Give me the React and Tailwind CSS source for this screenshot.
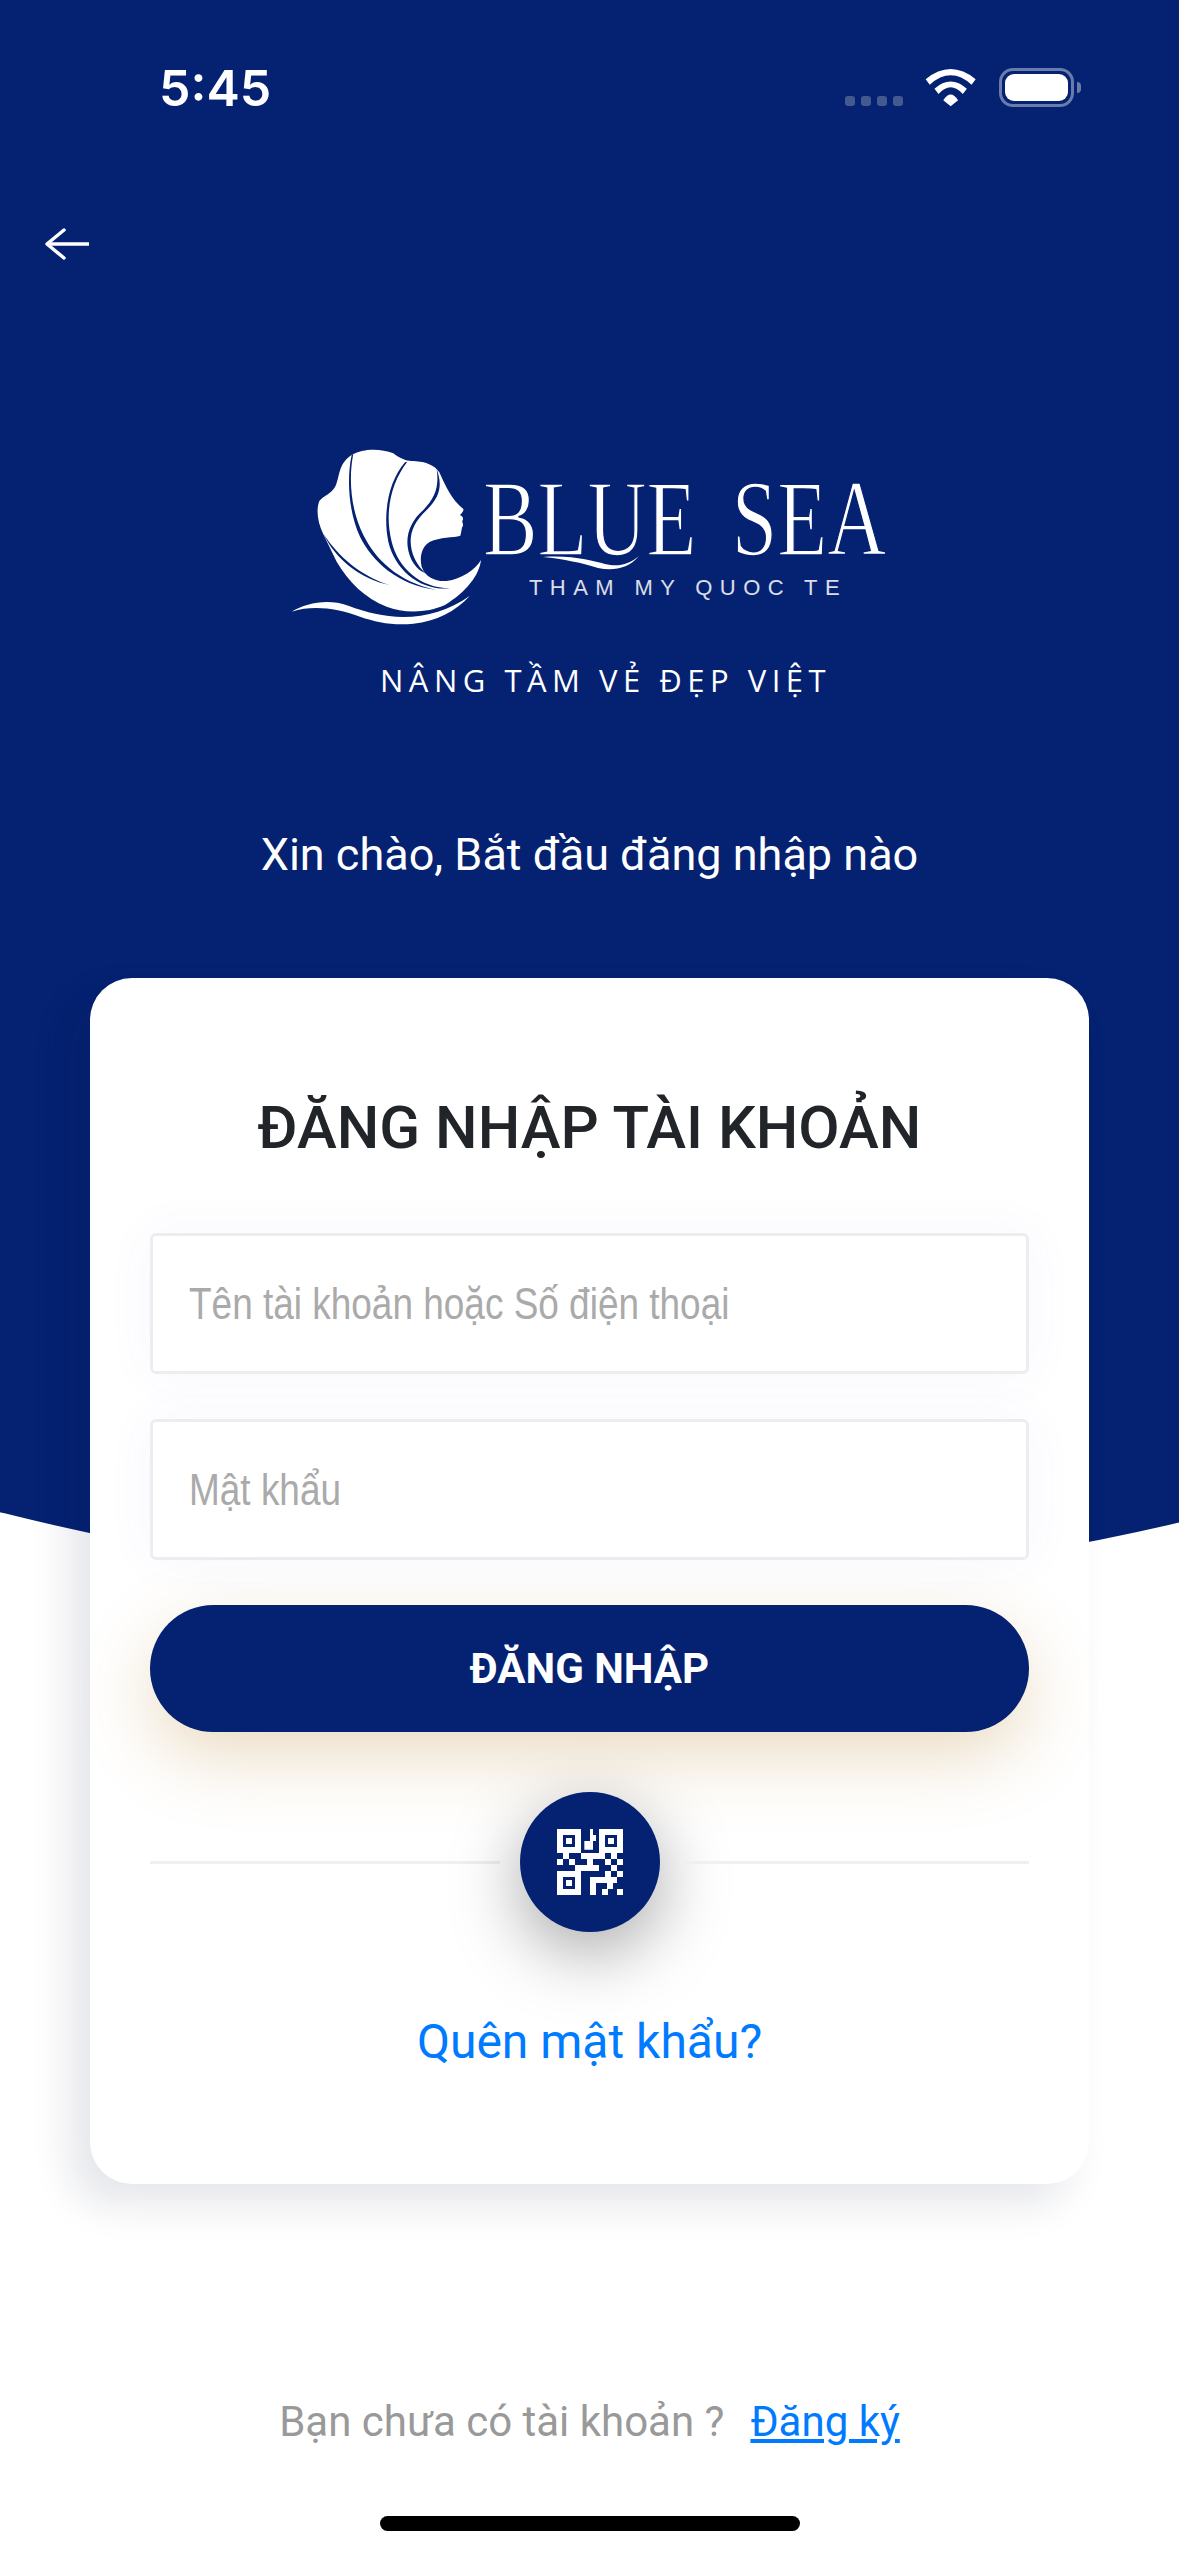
const navy = "#042172";

const StatusBar = () => (
  <div className="flex h-[130px] items-start justify-between pl-[159px] pr-[98px] pt-[58px]">
    <span className="font-['Inter',sans-serif] text-[50px] font-semibold leading-[60px] text-white">
      5:45
    </span>
    <div className="flex items-start pt-[10px]">
      {/* signal dots */}
      <div className="mt-[28px] flex gap-[6px]">
        {[0, 1, 2, 3].map((i) => (
          <div key={i} className="h-[10px] w-[10px] rounded-[3px] bg-[#44598f]" />
        ))}
      </div>
      <svg className="ml-[22px]" width="52" height="39" viewBox="318 55 154 115" fill="white">
        <path d="M320 88Q394 28 468 88L456 104Q394 48 332 104Z" />
        <path d="M346 116Q394 74 442 116L430 132Q394 92 358 132Z" />
        <path d="M372 150Q394 116 416 150L394 168Z" />
      </svg>
      {/* battery */}
      <div className="ml-[22px] flex items-center">
        <div className="h-[39px] w-[75px] rounded-[14px] border-[3px] border-[#6a7cab] p-[3px]">
          <div className="h-full w-full rounded-[9px] bg-white" />
        </div>
        <div className="ml-[3px] h-[11px] w-[4px] rounded-r-full bg-[#6a7cab]" />
      </div>
    </div>
  </div>
);

const BackArrow = () => (
  <svg className="ml-[45px] mt-[98px]" width="46" height="32" viewBox="0 0 46 32" fill="none" stroke="white" strokeWidth="3.5" strokeLinecap="round" strokeLinejoin="round">
    <path d="M2 16H44" strokeLinecap="butt" />
    <path d="M19 2L2 16L19 30" />
  </svg>
);

const LogoMark = () => (
  <svg width="220" height="200" viewBox="0 0 660 600" className="shrink-0">
    <path
      fill="white"
      d="M218 58C245 42 300 38 340 55C360 70 380 80 400 78C440 80 465 92 478 112C495 150 515 195 550 222C552 228 546 234 540 240C546 244 552 248 548 256C544 260 552 268 548 274C544 280 545 290 541 302C520 308 480 306 450 320C425 335 418 365 425 395C435 425 465 440 500 438C545 432 585 405 603 375C598 420 560 470 495 510C440 535 370 535 320 515C255 490 205 440 170 380L130 298C112 260 108 225 118 198C130 182 155 178 168 150C180 120 175 85 218 58Z"
    />
    <path
      fill="white"
      d="M35 530C80 505 140 490 205 512C260 532 310 545 370 546C440 545 510 525 570 482C525 530 470 558 400 566C340 572 290 562 240 545C170 520 100 510 35 530Z"
    />
    <path fill={navy} d="M220 56C205 130 212 225 250 300C285 370 350 440 470 465C350 448 278 380 240 305C205 230 200 130 215 60Z" />
    <path fill={navy} d="M382 80C335 140 312 230 335 320C355 400 420 458 510 460C420 468 345 405 325 320C308 235 325 140 375 82Z" />
    <path fill={navy} d="M130 296C175 365 245 425 330 450C240 432 165 370 130 296Z" />
    <path fill={navy} d="M470 103C488 150 480 185 440 225C400 262 385 300 395 345C402 375 420 400 437 415C410 405 388 375 383 335C378 295 395 255 430 225C465 190 478 155 470 103Z" />
  </svg>
);

const Logo = () => (
  <div className="ml-[280px] mt-[175px] flex h-[200px]">
    <LogoMark />
    <div className="relative -ml-[17px] pt-[29px]">
      <div className="h-[109px] w-[403px] origin-top-left scale-x-[0.75] whitespace-nowrap font-['Liberation_Serif',serif] text-[109px] leading-none text-white [-webkit-text-stroke:1.6px_#042172] [word-spacing:20px]">
        BLUE SEA
      </div>
      <svg className="absolute left-[60px] top-[118px]" width="100" height="20" viewBox="0 0 100 20" fill="white">
        <path d="M0 4C30 2 50 8 62 11C75 14 85 12 96 3C85 16 70 18 55 15C40 10 20 6 0 4Z" />
      </svg>
      <div className="ml-[46px] mt-[4px] whitespace-nowrap font-['Liberation_Sans',sans-serif] text-[22px] leading-none tracking-[7.4px] text-white/85">
        THAM MY QUOC TE
      </div>
    </div>
  </div>
);

const QrGlyph = () => (
  <svg width="66" height="66" viewBox="408 270 198 198" fill="white">
    {[
      [408, 270],
      [534, 270],
      [408, 396],
    ].map(([x, y]) => (
      <g key={`${x}-${y}`}>
        <rect x={x} y={y} width="72" height="72" />
        <rect x={x + 18} y={y + 18} width="36" height="36" fill={navy} />
        <rect x={x + 27} y={y + 27} width="18" height="18" />
      </g>
    ))}
    <path d="M507 270H516V288H525V306H516V332H490V306H507Z" />
    {/* data modules */}
    <path d="M426 342H444V360H426ZM480 342H552V360H480ZM570 342H588V360H570ZM408 360H426V378H408ZM444 360H462V378H444ZM498 360H516V378H498ZM552 360H570V378H552ZM588 360H606V378H588ZM462 378H534V396H462ZM570 378H588V396H570ZM552 396H570V414H552ZM588 396H606V414H588ZM507 414H588V432H507ZM507 432H525V468H507ZM558 432H576V450H558ZM543 450H561V468H543ZM588 450H606V468H588Z" />
  </svg>
);

const TextField = ({ label, className }) => (
  <div className={`flex h-[141px] items-center rounded-[6px] border-[3px] border-[#ecedef] bg-white pl-[36px] shadow-[0_0_50px_rgba(90,90,255,0.05)] ${className}`}>
    <span className="origin-left scale-x-[0.84] whitespace-nowrap font-['Liberation_Sans',sans-serif] text-[44px] leading-none text-[#aaaaaa]">
      {label}
    </span>
  </div>
);

export default function App() {
  return (
    <div className="relative h-[2556px] w-[1179px] overflow-hidden bg-white font-['Roboto',sans-serif]">
      {/* navy backdrop with the curved lower edge */}
      <div className="absolute -left-[1889px] -top-[3412px] h-[5000px] w-[5000px] rounded-full bg-[#042172]" />

      <div className="relative flex flex-col">
        <StatusBar />
        <div className="h-[130px]">
          <BackArrow />
        </div>
        <Logo />
        <div className="ml-[380px] mt-[25px] whitespace-nowrap font-['Open_Sans',sans-serif] text-[31px] leading-[40px] tracking-[5.5px] text-white">
          NÂNG TẦM VẺ ĐẸP VIỆT
        </div>
        <div className="mt-[125px] text-center text-[45px] leading-[60px] text-white">
          Xin chào, Bắt đầu đăng nhập nào
        </div>

        {/* login card */}
        <div className="ml-[90px] mt-[93px] w-[999px] rounded-[42px] bg-white px-[60px] pb-[112px] pt-[115px] shadow-[-20px_20px_40px_rgba(20,30,60,0.11)]">
          <h1 className="text-center text-[60px] font-medium leading-[70px] text-[#212529]">
            ĐĂNG NHẬP TÀI KHOẢN
          </h1>
          <TextField label="Tên tài khoản hoặc Số điện thoại" className="mt-[70px]" />
          <TextField label="Mật khẩu" className="mt-[45px]" />
          <button className="mt-[45px] h-[127px] w-full rounded-full bg-[#042172] text-[42px] font-bold text-white shadow-[0_25px_70px_rgba(190,140,60,0.3)]">
            ĐĂNG NHẬP
          </button>
          <div className="mt-[60px] flex items-center gap-[20px]">
            <div className="h-[3px] flex-1 bg-[#f0f0f0]" />
            <div className="flex h-[140px] w-[140px] items-center justify-center rounded-full bg-[#042172] shadow-[0_20px_70px_rgba(0,0,0,0.35)]">
              <QrGlyph />
            </div>
            <div className="h-[3px] flex-1 bg-[#f0f0f0]" />
          </div>
          <div className="mt-[80px] text-center text-[48px] leading-[60px] text-[#007aff]">
            Quên mật khẩu?
          </div>
        </div>

        <div className="mt-[213px] flex justify-center gap-[26px] text-[42px] leading-[50px]">
          <span className="text-[#999999]">Bạn chưa có tài khoản ?</span>
          <span className="text-[#007aff] underline">Đăng ký</span>
        </div>

        <div className="ml-[380px] mt-[69px] h-[15px] w-[420px] rounded-full bg-black" />
      </div>
    </div>
  );
}
